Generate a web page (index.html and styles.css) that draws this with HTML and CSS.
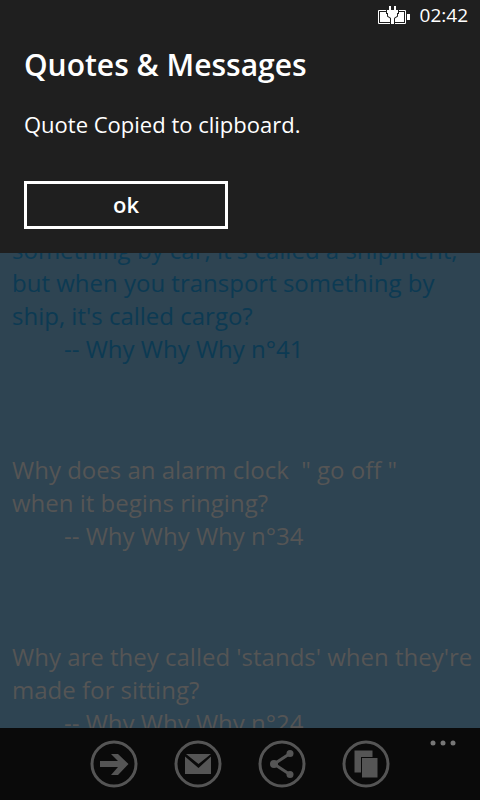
FILE: index.html
```
<!DOCTYPE html>
<html lang="en">
<head>
<meta charset="utf-8">
<meta name="viewport" content="width=device-width, initial-scale=1">
<title>Quotes &amp; Messages</title>
<link rel="stylesheet" href="styles.css">
</head>
<body>
<div class="phone">
  <main class="quotes">
    <article class="quote quote-selected">
      <p>something by car, it's called a shipment,<br>but when you transport something by<br>ship, it's called cargo?</p>
      <p class="source">-- Why Why Why n°41</p>
    </article>
    <article class="quote">
      <p>Why does an alarm clock&nbsp; " go off "<br>when it begins ringing?</p>
      <p class="source">-- Why Why Why n°34</p>
    </article>
    <article class="quote">
      <p>Why are they called 'stands' when they're<br>made for sitting?</p>
      <p class="source">-- Why Why Why n°24</p>
    </article>
  </main>

  <footer class="appbar">
    <button class="round" type="button" aria-label="Next">
      <svg viewBox="0 0 48 48"><circle cx="24" cy="24" r="22"/><path class="fill" d="M10 21h18l-7-7h7l10.500 10L28 35h-7l7-8H10z"/></svg>
    </button>
    <button class="round" type="button" aria-label="Mail">
      <svg viewBox="0 0 48 48"><circle cx="24" cy="24" r="22"/><path class="fill" d="M12 14h25L24.500 24zM11 16.500l13.500 11.500L37 16.500V34H11z"/></svg>
    </button>
    <button class="round" type="button" aria-label="Share">
      <svg viewBox="0 0 48 48"><circle cx="24" cy="24" r="22"/><path d="M32 13.500L16 24l16 10.500"/><circle class="fill" cx="32" cy="13.500" r="3.500"/><circle class="fill" cx="16" cy="24" r="4"/><circle class="fill" cx="32" cy="34.500" r="3.500"/></svg>
    </button>
    <button class="round" type="button" aria-label="Copy">
      <svg viewBox="0 0 48 48"><circle cx="24" cy="24" r="22"/><path class="fill" d="M12.500 10.500h18V17H19v15.500h-6.500zM20 18h15.500v19.500H20z"/></svg>
    </button>
    <button class="more" type="button" aria-label="More">
      <svg viewBox="0 0 26 6"><circle cx="3" cy="3" r="2.500"/><circle cx="13" cy="3" r="2.500"/><circle cx="23" cy="3" r="2.500"/></svg>
    </button>
  </footer>

  <section class="dialog" role="dialog" aria-labelledby="dialog-title">
    <div class="status">
      <svg class="battery" viewBox="0 0 32 18" aria-hidden="true">
        <path class="shell" d="M.500 4.500h27v13H.500z"/>
        <path class="charge" d="M2 6h24v10H2zM29 8h3v6h-3z"/>
        <path class="plug" d="M11 0h2v4h3V0h2v4h2v3h-1v3l-3 2v6h-3v-6l-3-2V7H9V4h2z"/>
      </svg>
      <time>02:42</time>
    </div>
    <h1 id="dialog-title">Quotes &amp; Messages</h1>
    <p class="message">Quote Copied to clipboard.</p>
    <button class="ok" type="button">ok</button>
  </section>
</div>
</body>
</html>
```
FILE: styles.css
```
* {
  box-sizing: border-box;
}

body,
h1,
p {
  margin: 0;
}

body {
  background: #0a0a0a;
  font-family: "Open Sans", "Noto Sans", sans-serif;
  font-variant-ligatures: none;
}

button {
  padding: 0;
  border: 0;
  background: none;
  color: inherit;
  font: inherit;
}

svg {
  display: block;
}

.phone {
  position: relative;
  display: flex;
  flex-direction: column;
  height: 100vh;
  overflow: hidden;
}

.quotes {
  flex: 1;
  min-height: 0;
  display: flex;
  flex-direction: column;
  gap: 88px;
  padding: 233px 12px 0;
  overflow: hidden;
  background: #2e4452;
  color: #555;
  font-size: 24px;
  line-height: 33px;
  white-space: nowrap;
}

.quote-selected {
  color: #0c3a53;
}

.source {
  padding-left: 52px;
}

.appbar {
  position: relative;
  display: flex;
  justify-content: center;
  gap: 36px;
  padding: 12px 0;
  background: #0a0a0a;
}

.round {
  width: 48px;
  height: 48px;
}

.round svg {
  fill: none;
  stroke: #555;
  stroke-width: 3;
}

.round .fill {
  fill: #555;
  stroke: none;
}

.more {
  position: absolute;
  top: 12px;
  right: 24px;
  width: 26px;
}

.more svg {
  fill: #777;
}

.dialog {
  position: absolute;
  top: 0;
  left: 0;
  right: 0;
  padding: 0 24px 24px;
  background: #1f1f1f;
  color: #fff;
}

.status {
  display: flex;
  justify-content: flex-end;
  align-items: center;
  gap: 10px;
  height: 30px;
  margin-right: -12px;
  font-size: 19px;
}

.battery {
  width: 32px;
  height: 18px;
}

.shell {
  fill: none;
  stroke: #fff;
}

.charge {
  fill: #fff;
}

.plug {
  fill: #fff;
  stroke: #1f1f1f;
  stroke-width: 2;
  paint-order: stroke;
}

.dialog h1 {
  margin-top: 14px;
  font-size: 30px;
  line-height: 42px;
  font-weight: 600;
}

.message {
  margin-top: 23px;
  font-size: 22px;
  line-height: 30px;
}

.ok {
  display: block;
  width: 204px;
  height: 48px;
  margin-top: 42px;
  padding-bottom: 2px;
  border: 3px solid #fff;
  font-size: 22px;
  font-weight: 600;
}
```
